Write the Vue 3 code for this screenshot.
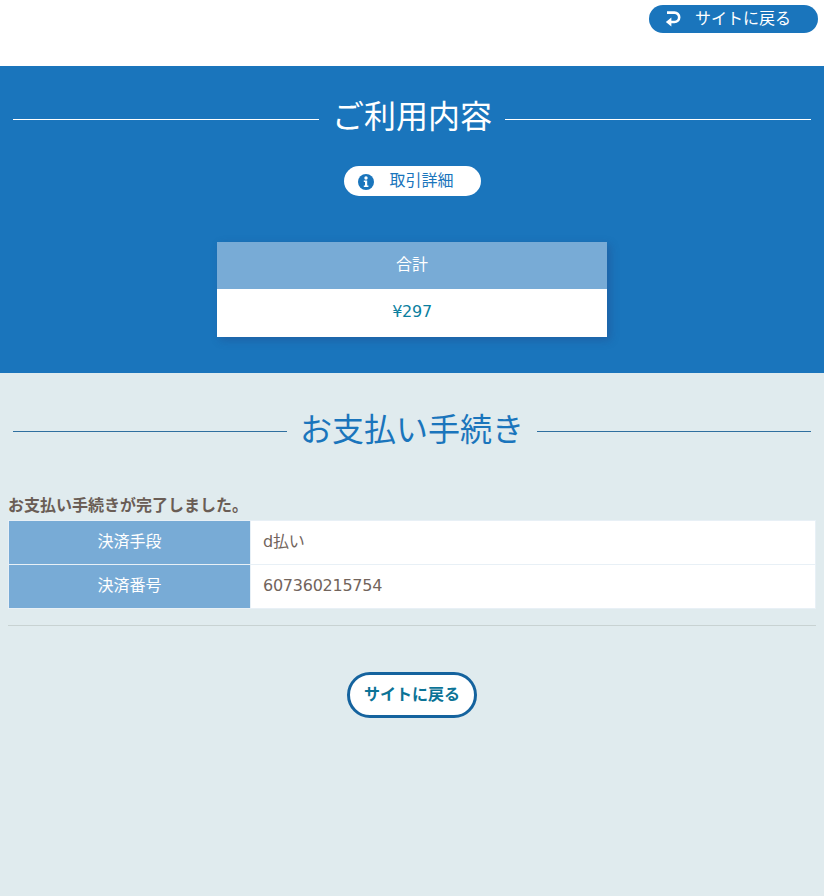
<script setup>
const rows = [
  { label: '決済手段', value: 'd払い' },
  { label: '決済番号', value: '607360215754' }
]
</script>

<template>
  <div class="page">
    <div class="topbar">
      <a class="back-pill">
        <svg class="back-icon" viewBox="0 0 16 16" width="16" height="16">
          <path d="M2 1.6H9.5a4.7 4.7 0 0 1 0 9.4H5" fill="none" stroke="#fff" stroke-width="2.6"/>
          <path d="M6.4 6.6V15.4L0.8 11Z" fill="#fff"/>
        </svg>
        <span class="nudge">サイトに戻る</span>
      </a>
    </div>

    <section class="summary">
      <div class="heading light">
        <span class="rule"></span>
        <h2>ご利用内容</h2>
        <span class="rule"></span>
      </div>
      <a class="detail-pill">
        <svg class="info-icon" viewBox="0 0 16 16" width="16" height="16">
          <circle cx="8" cy="8" r="8" fill="#1a75bc"/>
          <circle cx="8" cy="4" r="1.7" fill="#fff"/>
          <path d="M5.8 6.6H9.2V11.6H10.4V13H5.8V11.6H7V8H5.8Z" fill="#fff"/>
        </svg>
        <span class="nudge">取引詳細</span>
      </a>
      <div class="total-card">
        <div class="total-head">合計</div>
        <div class="total-body">¥297</div>
      </div>
    </section>

    <section class="payment">
      <div class="heading dark">
        <span class="rule"></span>
        <h2>お支払い手続き</h2>
        <span class="rule"></span>
      </div>
      <p class="done">お支払い手続きが完了しました。</p>
      <table class="info">
        <tbody>
          <tr v-for="r in rows" :key="r.label">
            <th>{{ r.label }}</th>
            <td>{{ r.value }}</td>
          </tr>
        </tbody>
      </table>
      <hr class="sep" />
      <div class="btn-row">
        <a class="return-btn">サイトに戻る</a>
      </div>
    </section>
  </div>
</template>

<style>
html, body { margin: 0; padding: 0; }
</style>

<style scoped>
.page {
  width: 824px;
  height: 896px;
  overflow: hidden;
  display: flex;
  flex-direction: column;
  background: #e0ebee;
  font-family: "Open Sans", "Noto Sans CJK JP", sans-serif;
  font-size: 16px;
  color: #6a5d55;
}
.topbar {
  height: 66px;
  background: #fff;
  display: flex;
  justify-content: flex-end;
  align-items: flex-start;
  padding: 5px 6px 0 0;
  box-sizing: border-box;
}
.back-pill {
  width: 169px;
  height: 28px;
  box-sizing: border-box;
  padding-left: 16px;
  border-radius: 14px;
  background: #1a75bc;
  color: #fff;
  display: flex;
  align-items: center;
  gap: 14px;
  font-size: 16px;
  line-height: 26px;
}
.back-icon { flex: none; }
.nudge { margin-bottom: 2px; }
.summary {
  height: 307px;
  background: #1a75bc;
  display: flex;
  flex-direction: column;
  align-items: center;
}
.heading {
  align-self: stretch;
  display: flex;
  align-items: center;
  padding: 0 13px;
  gap: 13px;
}
.heading h2 {
  margin: 0;
  font-weight: 400;
  font-size: 32px;
  line-height: 48px;
  flex: none;
}
.rule { flex: 1; height: 1px; margin-top: 6px; }
.light { padding-top: 26px; color: #fff; }
.light .rule { background: #fff; }
.dark { padding-top: 32px; color: #1a75bc; }
.dark .rule { background: #2f6f9f; margin-top: 4px; }
.detail-pill {
  margin-top: 26px;
  width: 137px;
  height: 30px;
  box-sizing: border-box;
  padding-left: 14px;
  border-radius: 15px;
  background: #fff;
  color: #1a75bc;
  display: flex;
  align-items: center;
  gap: 16px;
  font-size: 16px;
  line-height: 28px;
}
.info-icon { margin-top: 2px; }
.total-card {
  margin-top: 46px;
  width: 390px;
  text-align: center;
  box-shadow: 3px 3px 8px rgba(40, 60, 120, 0.35);
}
.total-head {
  height: 47px;
  line-height: 45px;
  background: #78abd6;
  color: #fff;
}
.total-body {
  height: 48px;
  line-height: 45px;
  background: #fff;
  color: #0b7fa0;
  font-family: "DejaVu Sans", "Noto Sans CJK JP", sans-serif;
  letter-spacing: -0.25px;
}
.payment {
  flex: 1;
  padding: 0;
}
.done {
  margin: 40px 8px 0;
  font-weight: 700;
  line-height: 24px;
  color: #6a5d55;
}
.info {
  margin: 3px 8px 0;
  width: 808px;
  border-collapse: collapse;
  table-layout: fixed;
  background: #fff;
}
.info th, .info td {
  height: 44px;
  box-sizing: border-box;
  border: 1px solid #e8f0f6;
  font-weight: 400;
  line-height: 24px;
}
.info th {
  width: 242px;
  padding: 0 0 3px;
  background: #78abd6;
  color: #fff;
  text-align: center;
}
.info td {
  padding: 0 0 2px 12px;
  color: #72645c;
  font-family: "DejaVu Sans", "Noto Sans CJK JP", sans-serif;
  letter-spacing: -0.25px;
}
.sep {
  margin: 16px 8px 0;
  border: 0;
  border-top: 1px solid #c8d2d2;
  height: 0;
}
.btn-row {
  display: flex;
  justify-content: center;
  margin-top: 46px;
}
.return-btn {
  width: 130px;
  height: 46px;
  box-sizing: border-box;
  border: 3px solid #15639e;
  border-radius: 23px;
  background: #fff;
  color: #0b7396;
  font-weight: 700;
  text-align: center;
  line-height: 38px;
}
</style>
